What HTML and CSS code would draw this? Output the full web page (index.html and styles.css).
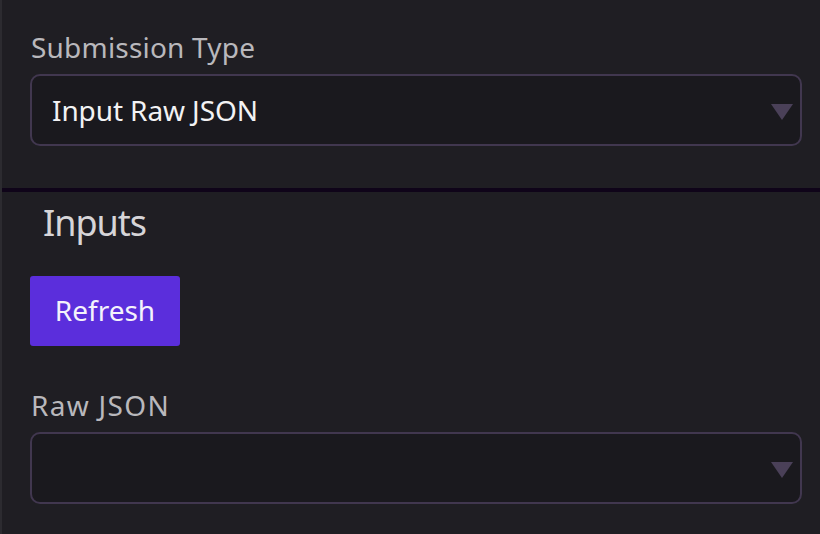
FILE: index.html
```html
<!DOCTYPE html>
<html>
<head>
<meta charset="utf-8">
<link rel="stylesheet" href="styles.css">
</head>
<body>
<div class="panel">
  <section class="top">
    <label class="field-label">Submission Type</label>
    <div class="select">
      <span class="select-value">Input Raw JSON</span>
      <span class="arrow"></span>
    </div>
  </section>
  <div class="divider"></div>
  <section class="inputs">
    <h2 class="heading">Inputs</h2>
    <button class="btn">Refresh</button>
    <label class="field-label raw">Raw JSON</label>
    <div class="select">
      <span class="select-value"></span>
      <span class="arrow"></span>
    </div>
  </section>
</div>
</body>
</html>
```

FILE: styles.css
```css
html, body {
  margin: 0;
  padding: 0;
  background: #1f1e23;
  width: 820px;
  height: 534px;
  overflow: hidden;
  font-family: "Noto Sans", "Open Sans", sans-serif;
}
.panel {
  border-left: 2px solid #2c2b30;
  height: 534px;
  box-sizing: border-box;
}
.top {
  display: flex;
  flex-direction: column;
  padding: 30px 18px 42px 28px;
}
.field-label {
  font-size: 28px;
  line-height: 34px;
  color: #b9b8bc;
  margin-left: 1px;
  letter-spacing: 0.2px;
}
.select {
  margin-top: 10px;
  height: 72px;
  box-sizing: border-box;
  border: 2px solid #41374f;
  border-radius: 10px;
  background: #1a191e;
  display: flex;
  align-items: center;
  justify-content: space-between;
  padding: 0 7px 0 20px;
}
.select-value {
  font-size: 28px;
  color: #f2f2f4;
  letter-spacing: -0.1px;
}
.arrow {
  width: 0;
  height: 0;
  border-left: 11.5px solid transparent;
  border-right: 11.5px solid transparent;
  border-top: 16px solid #4a4058;
  margin-top: 4px;
}
.divider {
  height: 4px;
  background: #0f0419;
}
.inputs {
  display: flex;
  flex-direction: column;
  align-items: stretch;
  padding: 9px 18px 0 28px;
}
.heading {
  margin: 0 0 0 13px;
  font-weight: 400;
  font-size: 36px;
  line-height: 44px;
  color: #d6d5d8;
  letter-spacing: -1px;
}
.btn {
  align-self: flex-start;
  margin-top: 31px;
  width: 150px;
  height: 70px;
  border: none;
  border-radius: 3px;
  background: #5b2edc;
  color: #f4f2fb;
  font-family: inherit;
  font-size: 28px;
  padding: 0 0 3px 0;
}
.field-label.raw {
  margin-top: 42px;
  letter-spacing: 1.3px;
}
```
